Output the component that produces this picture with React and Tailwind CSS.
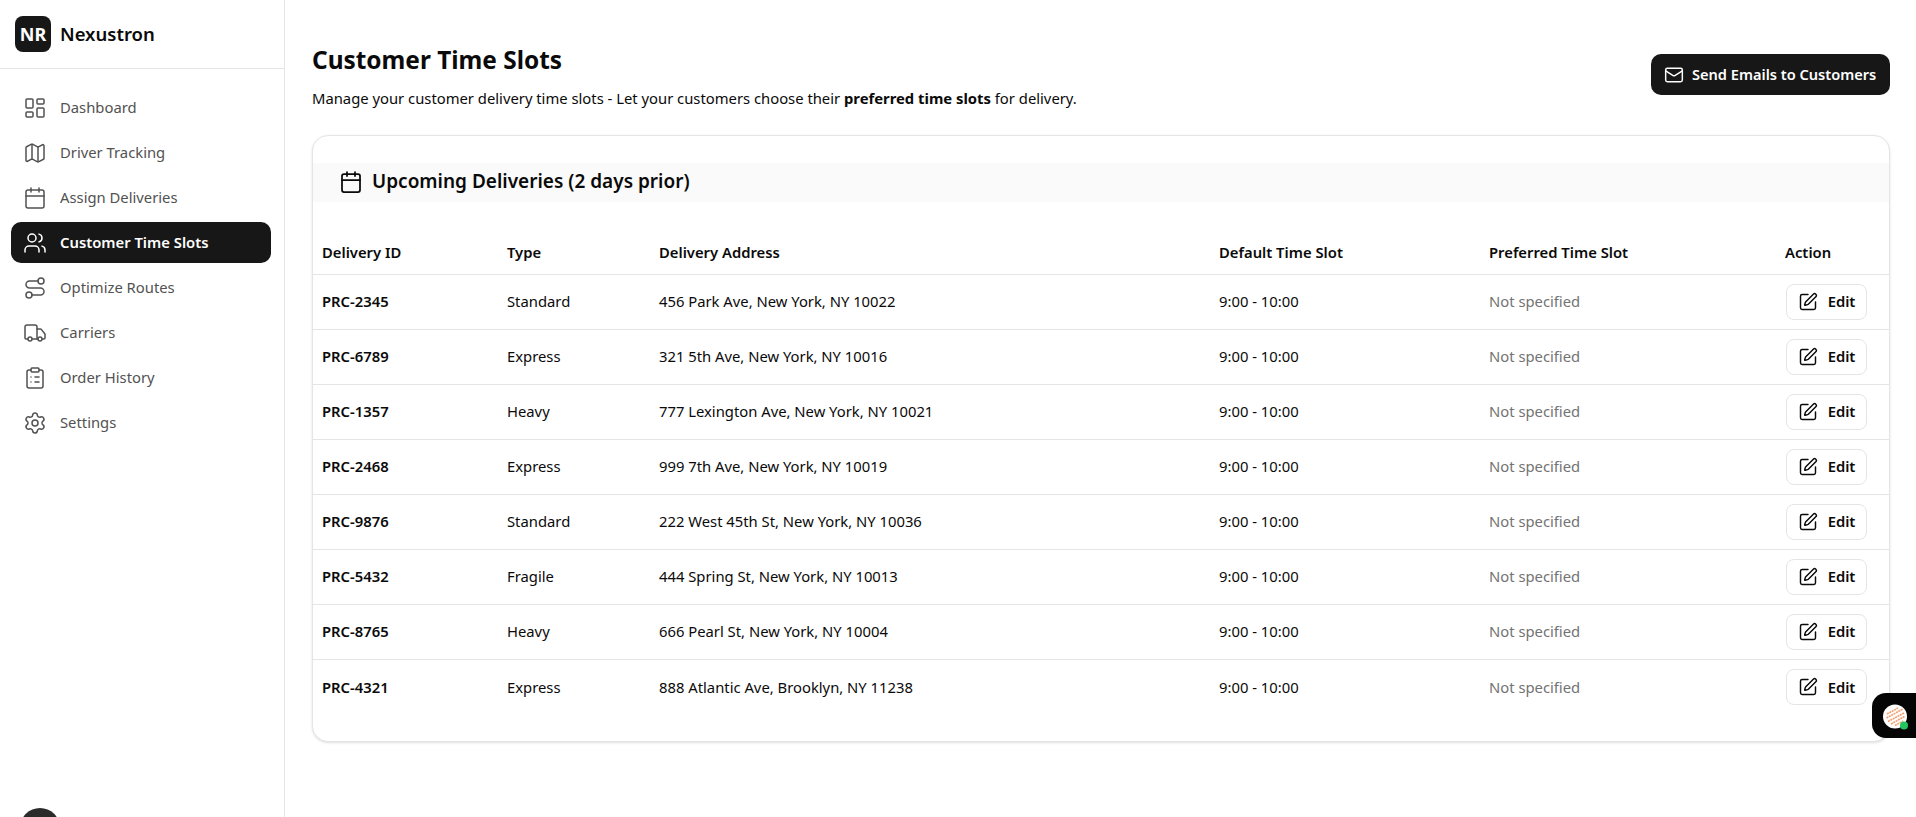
import { LayoutDashboard, Map, Calendar, Users, Route, Truck, ClipboardList, Settings, Mail, SquarePen } from 'lucide-react';

const navItems = [
  { label: 'Dashboard', icon: LayoutDashboard },
  { label: 'Driver Tracking', icon: Map },
  { label: 'Assign Deliveries', icon: Calendar },
  { label: 'Customer Time Slots', icon: Users, active: true },
  { label: 'Optimize Routes', icon: Route },
  { label: 'Carriers', icon: Truck },
  { label: 'Order History', icon: ClipboardList },
  { label: 'Settings', icon: Settings },
];

const deliveries = [
  { id: 'PRC-2345', type: 'Standard', address: '456 Park Ave, New York, NY 10022' },
  { id: 'PRC-6789', type: 'Express', address: '321 5th Ave, New York, NY 10016' },
  { id: 'PRC-1357', type: 'Heavy', address: '777 Lexington Ave, New York, NY 10021' },
  { id: 'PRC-2468', type: 'Express', address: '999 7th Ave, New York, NY 10019' },
  { id: 'PRC-9876', type: 'Standard', address: '222 West 45th St, New York, NY 10036' },
  { id: 'PRC-5432', type: 'Fragile', address: '444 Spring St, New York, NY 10013' },
  { id: 'PRC-8765', type: 'Heavy', address: '666 Pearl St, New York, NY 10004' },
  { id: 'PRC-4321', type: 'Express', address: '888 Atlantic Ave, Brooklyn, NY 11238' },
];

function Sidebar() {
  return (
    <aside className="flex h-screen w-[285px] flex-none flex-col overflow-hidden border-r border-[#e5e5e5] bg-white">
      <div className="flex h-[69px] flex-none items-center gap-[9px] border-b border-[#e5e5e5] pl-[15px]">
        <div className="flex h-9 w-9 items-center justify-center rounded-lg bg-[#171717] text-[18px] font-bold text-white">
          NR
        </div>
        <span className="text-[18.5px] font-semibold text-[#0a0a0a]">Nexustron</span>
      </div>

      <nav className="flex flex-none flex-col gap-1 pl-[11px] pr-[13px] pt-[18px]">
        {navItems.map(({ label, icon: Icon, active }) => (
          <div
            key={label}
            className={`flex h-[41px] items-center gap-[13px] rounded-[10px] pl-[12px] text-[14.8px] ${
              active ? 'bg-[#171717] font-semibold text-white' : 'text-[#525252]'
            }`}
          >
            <Icon size={24} strokeWidth={1.5} />
            {label}
          </div>
        ))}
      </nav>

      {/* Account avatar, cut off by the window */}
      <div className="ml-5 mt-[365px] h-10 w-10 flex-none rounded-full bg-[#2b2b2b]" />
    </aside>
  );
}

function DeliveryTable() {
  return (
    <table className="w-full table-fixed border-collapse text-[14.8px] text-[#0a0a0a]">
      <colgroup>
        <col className="w-[194px]" />
        <col className="w-[152px]" />
        <col className="w-[560px]" />
        <col className="w-[270px]" />
        <col className="w-[296px]" />
        <col />
      </colgroup>
      <thead>
        <tr className="h-[54px] border-b border-[#e5e5e5]">
          <th className="pl-[9px] pt-[10px] text-left font-semibold">Delivery ID</th>
          <th className="pt-[10px] text-left font-semibold">Type</th>
          <th className="pt-[10px] text-left font-semibold">Delivery Address</th>
          <th className="pt-[10px] text-left font-semibold">Default Time Slot</th>
          <th className="pt-[10px] text-left font-semibold">Preferred Time Slot</th>
          <th className="pt-[10px] text-left font-semibold">Action</th>
        </tr>
      </thead>
      <tbody>
        {deliveries.map((d, i) => (
          <tr key={d.id} className={`h-[55px] ${i < deliveries.length - 1 ? 'border-b border-[#e5e5e5]' : ''}`}>
            <td className="pl-[9px] font-semibold">{d.id}</td>
            <td>{d.type}</td>
            <td>{d.address}</td>
            <td>9:00 - 10:00</td>
            <td className="text-[#737373]">Not specified</td>
            <td>
              <button className="ml-px flex h-9 w-[81px] items-center justify-center gap-[10px] rounded-lg border border-[#e5e5e5] bg-white font-semibold">
                <SquarePen size={20} strokeWidth={1.75} />
                Edit
              </button>
            </td>
          </tr>
        ))}
      </tbody>
    </table>
  );
}

export default function App() {
  return (
    <div className="relative flex h-screen overflow-hidden bg-white font-['Noto_Sans',sans-serif]">
      <Sidebar />

      <main className="min-w-0 flex-1 pl-[27px] pr-[26px] pt-[44px]">
        <div className="flex items-start justify-between">
          <div>
            <h1 className="text-[24.4px] font-bold leading-8 text-[#0a0a0a]">Customer Time Slots</h1>
            <p className="mt-[12px] text-[14.8px] leading-5 text-[#0a0a0a]">
              Manage your customer delivery time slots - Let your customers choose their{' '}
              <span className="font-bold">preferred time slots</span> for delivery.
            </p>
          </div>
          <button className="mt-[10px] flex h-[41px] w-[239px] items-center gap-2 rounded-[10px] bg-[#171717] pl-[13px] text-[14.6px] font-semibold text-white">
            <Mail size={20} strokeWidth={1.75} />
            Send Emails to Customers
          </button>
        </div>

        <section className="mt-[27px] h-[607px] rounded-2xl border border-[#e5e5e5] bg-white pt-[27px] shadow-sm">
          <div className="flex h-[39px] items-center gap-[9px] bg-[#fafafa] pb-[2px] pl-[26px] text-[19px] font-semibold text-[#0a0a0a]">
            <Calendar size={24} strokeWidth={1.75} />
            Upcoming Deliveries (2 days prior)
          </div>
          <div className="pt-[18px]">
            <DeliveryTable />
          </div>
        </section>
      </main>

      {/* Support chat launcher */}
      <div className="absolute bottom-[79px] right-0 flex h-[45px] w-[44px] items-center rounded-l-[14px] bg-[#050505] pl-[9px]">
        <svg width="28" height="28" viewBox="0 0 28 28">
          <circle cx="14" cy="14.5" r="12" fill="#fff" />
          <path d="M6 12L17 6M5.500 16L22 7M7 19.500L23 11M10 22L23.500 14.500M14 23.500L22 19" stroke="#f0a070" strokeWidth="1.7" strokeDasharray="2 0.7" />
          <circle cx="23" cy="23.500" r="4" fill="#22c55e" />
        </svg>
      </div>
    </div>
  );
}
